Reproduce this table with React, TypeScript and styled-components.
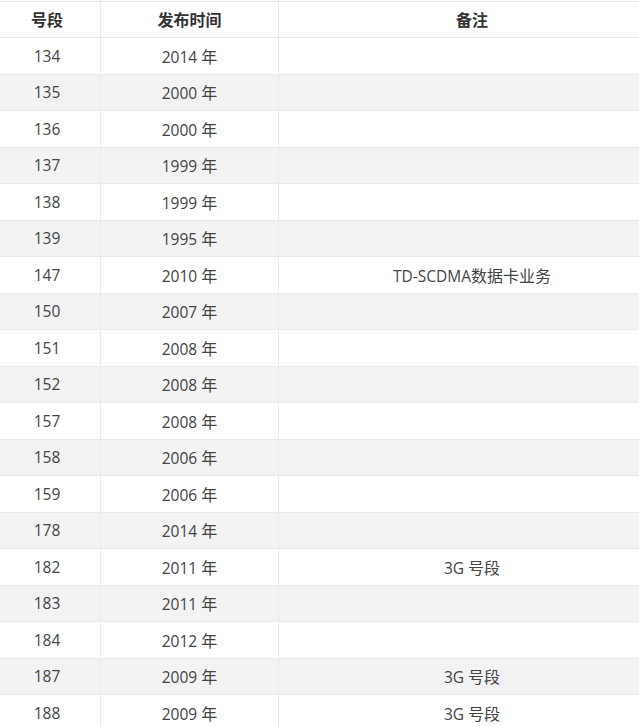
import React from 'react';
import styled, { createGlobalStyle } from 'styled-components';

const GlobalStyle = createGlobalStyle`
  html, body {
    margin: 0;
    padding: 0;
    background: #fff;
    overflow: hidden;
  }
  body {
    font-family: "Open Sans", "Noto Sans CJK SC", sans-serif;
    color: #333;
  }
`;

// the table is wider than the window; it is cropped on both sides
const Table = styled.table`
  width: 669px;
  margin: 1px 0 0 -6px;
  border-collapse: collapse;
  table-layout: fixed;
  font-size: 15.5px;
`;

const HeadCell = styled.th<{ $w: number }>`
  width: ${(p) => p.$w}px;
  height: 33px;
  padding: 0 0 2px;
  font-family: "Noto Sans CJK SC", sans-serif;
  font-size: 16px;
  font-weight: 700;
  color: #333;
  text-align: center;
  vertical-align: middle;
  border-top: 1px solid #eaeaea;
  border-bottom: 1px solid #eaeaea;
  border-left: 1px solid #ececec;
  &:first-child {
    border-left: none;
  }
`;

const Row = styled.tr<{ $striped: boolean }>`
  background: ${(p) => (p.$striped ? '#f3f3f3' : '#fff')};
`;

const Cell = styled.td`
  height: 35.5px;
  padding: 0;
  text-align: center;
  vertical-align: middle;
  color: #444;
  border-bottom: 1px solid #eaeaea;
  border-left: 1px solid #ececec;
  &:first-child {
    border-left: none;
  }
`;

const Han = styled.span`
  font-family: "Noto Sans CJK SC", sans-serif;
  font-size: 16px;
`;

const rows: [string, string, string][] = [
  ['134', '2014', ''],
  ['135', '2000', ''],
  ['136', '2000', ''],
  ['137', '1999', ''],
  ['138', '1999', ''],
  ['139', '1995', ''],
  ['147', '2010', 'TD-SCDMA|数据卡业务'],
  ['150', '2007', ''],
  ['151', '2008', ''],
  ['152', '2008', ''],
  ['157', '2008', ''],
  ['158', '2006', ''],
  ['159', '2006', ''],
  ['178', '2014', ''],
  ['182', '2011', '3G |号段'],
  ['183', '2011', ''],
  ['184', '2012', ''],
  ['187', '2009', '3G |号段'],
  ['188', '2009', '3G |号段'],
];

const Note: React.FC<{ text: string }> = ({ text }) => {
  if (!text) return null;
  const [latin, han] = text.split('|');
  return (
    <>
      {latin}
      <Han>{han}</Han>
    </>
  );
};

const App: React.FC = () => {
  return (
    <>
      <GlobalStyle />
      <Table>
        <thead>
          <tr>
            <HeadCell $w={106}>号段</HeadCell>
            <HeadCell $w={177}>发布时间</HeadCell>
            <HeadCell $w={386}>备注</HeadCell>
          </tr>
        </thead>
        <tbody>
          {rows.map(([seg, year, note], i) => (
            <Row key={seg} $striped={i % 2 === 1}>
              <Cell>{seg}</Cell>
              <Cell>
                {year} <Han>年</Han>
              </Cell>
              <Cell>
                <Note text={note} />
              </Cell>
            </Row>
          ))}
        </tbody>
      </Table>
    </>
  );
};

export default App;
